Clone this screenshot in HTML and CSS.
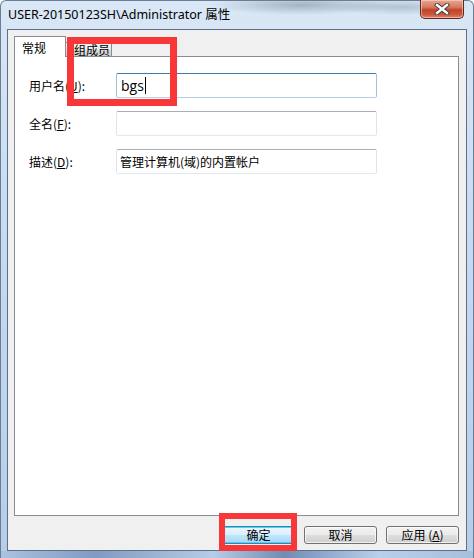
FILE: index.html
```html
<!DOCTYPE html>
<html>
<head>
<meta charset="utf-8">
<link rel="stylesheet" href="styles.css">
</head>
<body>
<div class="window">
  <div class="titlebar">
    <span class="title">USER-20150123SH\Administrator 属性</span>
    <div class="close">
      <svg width="16" height="12" viewBox="0 0 16 12">
        <path d="M3 2 L13 10 M13 2 L3 10" stroke="#3a3a3a" stroke-width="4.2" stroke-linecap="square" fill="none"/>
        <path d="M3 2 L13 10 M13 2 L3 10" stroke="#ffffff" stroke-width="2.4" stroke-linecap="square" fill="none"/>
      </svg>
    </div>
  </div>
  <div class="client">
    <div class="tabs">
      <div class="tab active">常规</div>
      <div class="tab">组成员</div>
    </div>
    <div class="panel">
      <div class="row">
        <label class="lbl">用户名(<u>U</u>):</label>
        <div class="field focused"><span class="val latin">bgs</span><span class="caret"></span></div>
      </div>
      <div class="row">
        <label class="lbl">全名(<u>F</u>):</label>
        <div class="field"></div>
      </div>
      <div class="row">
        <label class="lbl">描述(<u>D</u>):</label>
        <div class="field"><span class="val">管理计算机(域)的内置帐户</span></div>
      </div>
    </div>
    <div class="buttons">
      <div class="btn default">确定</div>
      <div class="btn">取消</div>
      <div class="btn">应用 (<u>A</u>)</div>
    </div>
  </div>
  <div class="bottom-glass"></div>
  <div class="mark mark-tab"></div>
  <div class="mark mark-ok"></div>
</div>
</body>
</html>
```
FILE: styles.css
```css
* { box-sizing: border-box; }
html, body { margin: 0; padding: 0; background: #ffffff; }
body { width: 474px; height: 558px; overflow: hidden; }

.window {
  position: relative;
  width: 474px;
  height: 558px;
  display: flex;
  flex-direction: column;
  border-radius: 6px 6px 0 0;
  background:
    radial-gradient(ellipse 90px 10px at 300px 4px, rgba(70,80,95,0.35), rgba(70,80,95,0) 100%),
    radial-gradient(ellipse 70px 8px at 400px 6px, rgba(70,80,95,0.25), rgba(70,80,95,0) 100%),
    linear-gradient(180deg, #d9e7f6 0%, #c7dbf1 40%, #b6cde8 100%);
  border: 1px solid #6a7d96;
  border-bottom: none;
  font-family: "Noto Sans CJK SC", "Noto Sans", sans-serif;
}

.titlebar {
  height: 28px;
  flex: none;
  display: flex;
  align-items: flex-start;
  justify-content: space-between;
  padding-left: 7px;
  padding-right: 9px;
}
.title {
  font-family: "Noto Sans", "Noto Sans CJK SC", sans-serif;
  font-size: 12.5px;
  line-height: 18px;
  padding-top: 5px;
  color: #000;
  white-space: nowrap;
}
.close {
  width: 44px;
  height: 19px;
  margin-top: -1px;
  border: 1px solid #5a2a22;
  border-top: none;
  border-radius: 0 0 5px 5px;
  background: linear-gradient(180deg, #e8a593 0%, #d47a62 40%, #c2432a 55%, #c8563c 80%, #e2866a 100%);
  box-shadow: inset 0 0 0 1px rgba(255,220,210,0.55);
  display: flex;
  align-items: center;
  justify-content: center;
}

.client {
  flex: none;
  height: 522px;
  margin: 0 6px;
  background: #f0f0f0;
  border: 1px solid #5f6f86;
  padding: 6px 7px 6px 6px;
  display: flex;
  flex-direction: column;
}

.tabs {
  height: 20px;
  display: flex;
  align-items: flex-end;
  position: relative;
  z-index: 2;
}
.tab {
  font-size: 12px;
  line-height: 13px;
  height: 14px;
  border: 1px solid #898c95;
  border-bottom: none;
  background: linear-gradient(180deg, #f3f3f3 0%, #ebebeb 50%, #dcdcdc 51%, #cfcfcf 100%);
  color: #000;
  margin-left: -1px;
  white-space: nowrap;
}
.tab.active {
  margin-left: 0;
  width: 52px;
  height: 21px;
  margin-bottom: -1px;
  padding: 3px 0 0 7px;
  line-height: 15px;
  background: #ffffff;
  position: relative;
  z-index: 3;
}
.tab:not(.active) { width: 47px; padding: 0 0 0 8px; }

.panel {
  height: 460px;
  background: #ffffff;
  border: 1px solid #898c95;
  padding: 16px 14px 0 14px;
  display: flex;
  flex-direction: column;
  gap: 13px;
}
.row {
  display: flex;
  align-items: center;
}
.lbl {
  width: 87px;
  font-size: 12px;
  color: #000;
  line-height: 16px;
}
.lbl u { text-decoration: underline; text-underline-offset: 1px; }
.field {
  width: 261px;
  height: 25px;
  border: 1px solid #e2e3ea;
  border-top-color: #abadb3;
  border-bottom-color: #e3e9ef;
  border-radius: 2px;
  background: #fff;
  display: flex;
  align-items: center;
  padding-left: 3px;
}
.field.focused {
  border-color: #b5cfe7;
  border-top-color: #3d7bad;
  border-left-color: #a4c2de;
  border-right-color: #a4c2de;
}
.val {
  font-size: 12px;
  color: #000;
  white-space: nowrap;
}
.val.latin {
  font-family: "Open Sans", "Noto Sans", sans-serif;
  font-size: 14px;
  padding-left: 1px;
}
.caret {
  width: 1px;
  height: 17px;
  background: #000;
  margin-left: 1px;
}

.buttons {
  margin-top: 10px;
  display: flex;
  justify-content: flex-end;
  gap: 9px;
}
.btn {
  width: 73px;
  height: 18px;
  border: 1px solid #707070;
  border-radius: 3px;
  background: linear-gradient(180deg, #f2f2f2 0%, #ebebeb 48%, #dddddd 52%, #cfcfcf 100%);
  box-shadow: inset 0 0 0 1px rgba(255,255,255,0.7);
  font-size: 12px;
  line-height: 16px;
  text-align: center;
  color: #000;
}
.btn.default {
  border-color: #3c7fb1;
  background: linear-gradient(180deg, #eaf6fd 0%, #d9f0fc 48%, #bee6fd 52%, #a7d9f5 100%);
  box-shadow: inset 0 0 0 1px #48d4f7;
}

.bottom-glass {
  flex: 1;
  background: linear-gradient(90deg, #a9c3e0 0%, #7f9bbf 20%, #b5cde6 45%, #6f8cb3 60%, #b8d0ea 80%, #a5bfdd 100%);
}

.mark {
  position: absolute;
  border-style: solid;
  border-color: #f83838;
  z-index: 10;
}
.mark-tab {
  left: 66px;
  top: 36px;
  width: 110px;
  height: 69px;
  border-width: 7px;
}
.mark-ok {
  left: 218px;
  top: 512px;
  width: 78px;
  height: 38px;
  border-width: 6px;
}
```
